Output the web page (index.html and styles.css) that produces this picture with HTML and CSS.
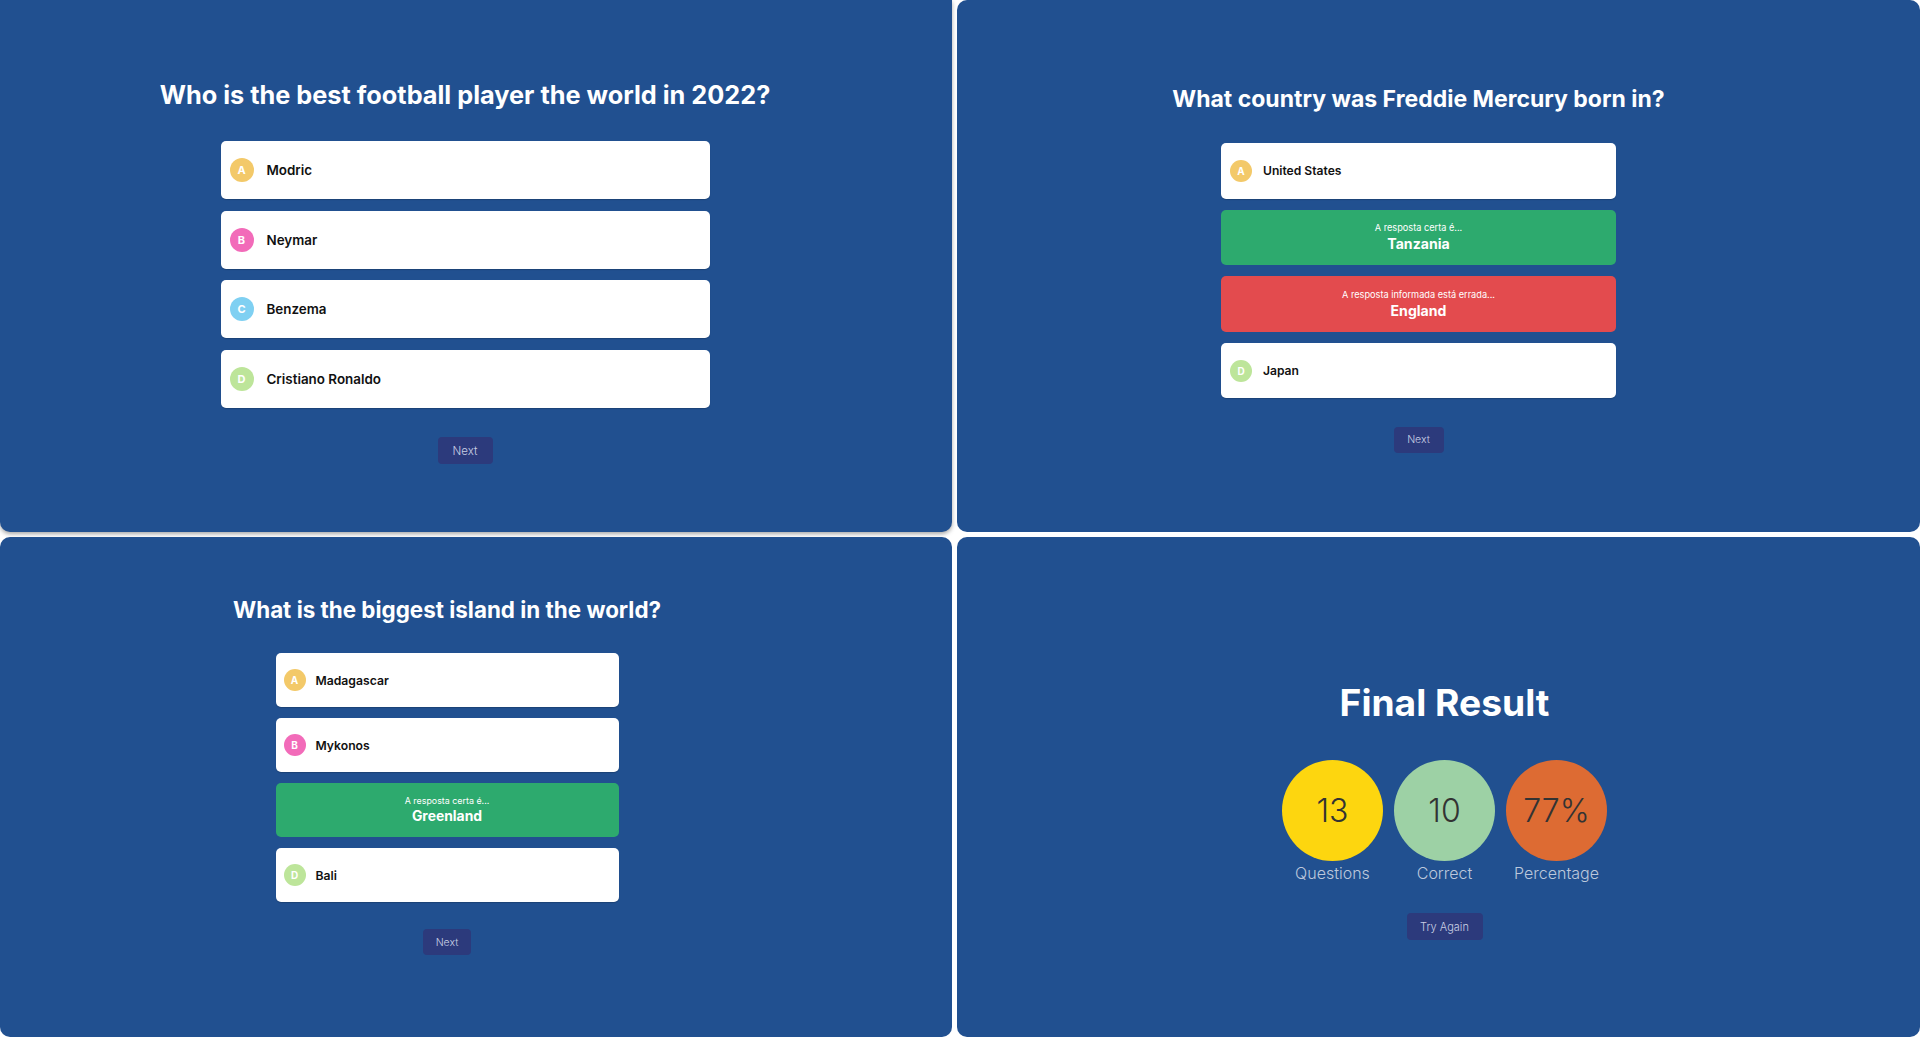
FILE: index.html
```html
<!DOCTYPE html>
<html lang="pt">
<head>
<meta charset="utf-8">
<title>Quiz</title>
<link rel="stylesheet" href="styles.css">
</head>
<body>
<main class="board">
  <section class="panel panel-q1">
    <h2 class="question">Who is the best football player the world in 2022?</h2>
    <ul class="options">
      <li class="option"><span class="badge badge-a">A</span><span class="label">Modric</span></li>
      <li class="option"><span class="badge badge-b">B</span><span class="label">Neymar</span></li>
      <li class="option"><span class="badge badge-c">C</span><span class="label">Benzema</span></li>
      <li class="option"><span class="badge badge-d">D</span><span class="label">Cristiano Ronaldo</span></li>
    </ul>
    <button class="btn">Next</button>
  </section>

  <section class="panel panel-q2">
    <h2 class="question">What country was Freddie Mercury born in?</h2>
    <ul class="options">
      <li class="option"><span class="badge badge-a">A</span><span class="label">United States</span></li>
      <li class="option option-right"><span class="note">A resposta certa é...</span><span class="answer">Tanzania</span></li>
      <li class="option option-wrong"><span class="note">A resposta informada está errada...</span><span class="answer">England</span></li>
      <li class="option"><span class="badge badge-d">D</span><span class="label">Japan</span></li>
    </ul>
    <button class="btn">Next</button>
  </section>

  <section class="panel panel-q3">
    <h2 class="question">What is the biggest island in the world?</h2>
    <ul class="options">
      <li class="option"><span class="badge badge-a">A</span><span class="label">Madagascar</span></li>
      <li class="option"><span class="badge badge-b">B</span><span class="label">Mykonos</span></li>
      <li class="option option-right"><span class="note">A resposta certa é...</span><span class="answer">Greenland</span></li>
      <li class="option"><span class="badge badge-d">D</span><span class="label">Bali</span></li>
    </ul>
    <button class="btn">Next</button>
  </section>

  <section class="panel panel-result">
    <h1 class="result-title">Final Result</h1>
    <div class="stats">
      <div class="stat">
        <div class="circle circle-yellow">13</div>
        <span class="stat-label">Questions</span>
      </div>
      <div class="stat">
        <div class="circle circle-green">10</div>
        <span class="stat-label">Correct</span>
      </div>
      <div class="stat">
        <div class="circle circle-orange">77%</div>
        <span class="stat-label">Percentage</span>
      </div>
    </div>
    <button class="btn btn-retry">Try Again</button>
  </section>
</main>
</body>
</html>
```

FILE: styles.css
```css
* { box-sizing: border-box; }

html, body {
  margin: 0;
  padding: 0;
  background: #ffffff;
}

body {
  font-family: "Inter", "Noto Sans", sans-serif;
  width: 1920px;
  height: 1037px;
  overflow: hidden;
}

.board {
  display: grid;
  grid-template-columns: 952px 963px;
  grid-template-rows: 532px 500px;
  gap: 5px;
  height: 1037px;
}

.panel {
  background: #215090;
  border-radius: 10px;
  display: flex;
  flex-direction: column;
  align-items: center;
}

.panel-q1 {
  padding: 76px 22px 0 0;
  box-shadow: 0 2px 4px rgba(0, 0, 0, 0.35);
  border-radius: 0 0 10px 10px;
}

.panel-q2 {
  padding: 82px 40px 0 0;
}

.panel-q3 {
  padding: 57px 58px 0 0;
}

.panel-result {
  padding: 141px 0 0 12px;
}

.question {
  margin: 0;
  color: #ffffff;
  font-weight: 700;
  white-space: nowrap;
}

.panel-q1 .question { font-size: 25.3px; line-height: 37px; }
.panel-q2 .question { font-size: 23px; line-height: 34px; }
.panel-q3 .question { font-size: 22.4px; line-height: 32px; }

.options {
  list-style: none;
  margin: 0;
  padding: 0;
  display: flex;
  flex-direction: column;
}

.panel-q1 .options { width: 489px; margin-top: 28px; gap: 11.5px; }
.panel-q2 .options { width: 395px; margin-top: 27.3px; gap: 11.2px; }
.panel-q3 .options { width: 343px; margin-top: 27.3px; gap: 11px; }

.option {
  background: #ffffff;
  border-radius: 5px;
  display: flex;
  align-items: center;
  padding-left: 9px;
  box-shadow: 0 1px 1px rgba(0, 0, 0, 0.18);
}

.panel-q1 .option { height: 58px; }
.panel-q2 .option { height: 55.4px; }
.panel-q3 .option { height: 54px; }

.badge {
  flex: none;
  border-radius: 50%;
  color: #ffffff;
  font-weight: 700;
  display: flex;
  align-items: center;
  justify-content: center;
}

.panel-q1 .badge { width: 24px; height: 24px; font-size: 11px; margin-right: 13px; }
.panel-q2 .badge { width: 22px; height: 22px; font-size: 10px; margin-right: 11px; }
.panel-q3 .badge { width: 22px; height: 22px; font-size: 10px; margin-right: 10px; margin-left: -1px; }

.badge-a { background: #f3c969; }
.badge-b { background: #f26bb9; }
.badge-c { background: #7fd0f2; }
.badge-d { background: #bde59a; }

.label {
  color: #111111;
  font-weight: 600;
}

.panel-q1 .label { font-size: 13.4px; }
.panel-q2 .label { font-size: 12.1px; }
.panel-q3 .label { font-size: 12.2px; }

.option-right,
.option-wrong {
  flex-direction: column;
  justify-content: center;
  padding-left: 0;
  color: #ffffff;
  box-shadow: none;
}

.option-right { background: #2daa6e; }
.option-wrong { background: #e34b4e; }

.note {
  font-size: 9.2px;
  line-height: 12px;
  font-weight: 400;
}

.answer {
  font-size: 14.1px;
  line-height: 19px;
  font-weight: 700;
}

.panel-q3 .note { font-size: 8.9px; }
.panel-q3 .answer { font-size: 13.9px; }

.btn {
  font-family: inherit;
  border: none;
  border-radius: 4px;
  background: #2c3a7c;
  color: #c9cfe4;
  font-weight: 300;
  padding: 0;
}

.panel-q1 .btn { width: 55px; height: 27px; font-size: 11.5px; margin-top: 29.5px; }
.panel-q2 .btn { width: 50px; height: 26px; font-size: 10.5px; margin-top: 28.3px; }
.panel-q3 .btn { width: 48px; height: 26px; font-size: 10.5px; margin-top: 27px; }

.result-title {
  margin: 0;
  color: #ffffff;
  font-size: 37.2px;
  line-height: 50px;
  font-weight: 700;
}

.stats {
  display: flex;
  gap: 11px;
  margin-top: 32px;
}

.stat {
  display: flex;
  flex-direction: column;
  align-items: center;
}

.circle {
  width: 101px;
  height: 101px;
  border-radius: 50%;
  display: flex;
  align-items: center;
  justify-content: center;
  color: #333333;
  font-size: 32px;
  font-weight: 300;
}

.circle-yellow { background: #fdd60f; }
.circle-green { background: #9dd1a5; }
.circle-orange { background: #dd6b33; }

.stat-label {
  color: #bcc8dc;
  font-size: 16px;
  line-height: 24px;
  font-weight: 300;
}

.btn-retry {
  width: 76px;
  height: 27px;
  font-size: 11px;
  margin-top: 28px;
}
```
